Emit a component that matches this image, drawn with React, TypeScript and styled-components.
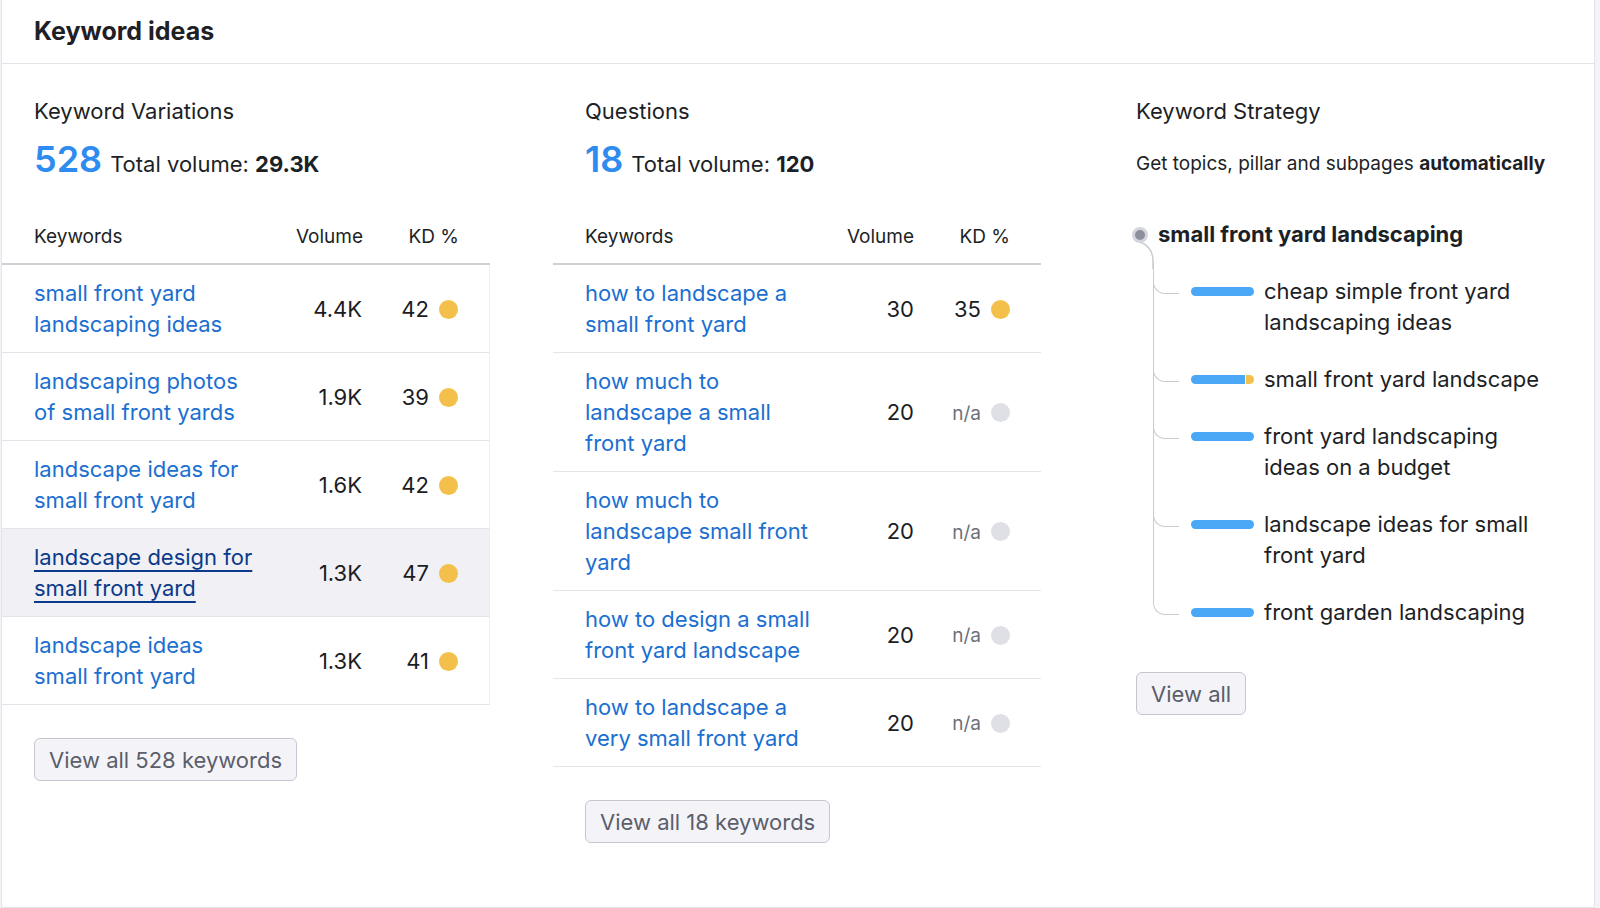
import React from 'react';
import styled, { createGlobalStyle } from 'styled-components';

const GlobalStyle = createGlobalStyle`
  html, body {
    margin: 0;
    padding: 0;
    background: #f4f4f8;
  }
  body {
    font-family: Inter, "Noto Sans", "Liberation Sans", sans-serif;
    color: #1d1f26;
    -webkit-font-smoothing: antialiased;
  }
  * {
    box-sizing: border-box;
  }
`;

const Page = styled.div`
  padding: 0 5px 0 1px;
  min-height: 100vh;
`;

const Card = styled.section`
  background: #fff;
  border: 1px solid #e3e4ea;
  border-top: none;
  min-height: 100vh;
`;

const CardHeader = styled.header`
  height: 64px;
  display: flex;
  align-items: center;
  padding: 0 32px;
  border-bottom: 1px solid #e4e5ea;
`;

const CardTitle = styled.h2`
  margin: 0;
  font-size: 25px;
  line-height: 31px;
  font-weight: 700;
  color: #1f2026;
`;

const Columns = styled.div`
  display: grid;
  grid-template-columns: repeat(3, 488px);
  column-gap: 63px;
  padding-top: 32px;
`;

const Column = styled.div`
  display: flex;
  flex-direction: column;
`;

const ColumnTitle = styled.h3`
  margin: 0;
  padding: 0 32px;
  font-size: 22px;
  line-height: 31px;
  font-weight: 400;
  color: #1d1f26;
`;

const Stats = styled.div`
  display: flex;
  align-items: baseline;
  gap: 8px;
  margin-top: 10px;
  padding: 0 32px;
  line-height: 44px;
`;

const Count = styled.span`
  font-size: 36px;
  font-weight: 600;
  color: #2e8bf0;
`;

const Total = styled.span`
  font-size: 22px;
  color: #1d1f26;

  b {
    font-weight: 700;
  }
`;

const Table = styled.div`
  margin-top: 37px;
`;

const HeadRow = styled.div<{ $kw: number }>`
  display: grid;
  grid-template-columns: ${p => p.$kw}px 1fr 96px;
  padding: 0 31px 13px 32px;
  border-bottom: 2px solid #cfd1d7;
  font-size: 19px;
  line-height: 27px;
  color: #1d1f26;
`;

const HeadCell = styled.div<{ $right?: boolean }>`
  text-align: ${p => (p.$right ? 'right' : 'left')};
`;

const Row = styled.div<{ $kw: number; $hover?: boolean; $edge?: boolean }>`
  display: grid;
  grid-template-columns: ${p => p.$kw}px 1fr 67px 29px;
  align-items: center;
  padding: 13px 31px 12px 32px;
  border-bottom: 1px solid #e4e5ea;
  border-right: ${p => (p.$edge ? '1px solid #eceef2' : 'none')};
  background: ${p => (p.$hover ? '#f0f0f5' : '#fff')};
`;

const KeywordLink = styled.a<{ $hover?: boolean }>`
  font-size: 22px;
  line-height: 31px;
  color: ${p => (p.$hover ? '#0b3a8a' : '#1b6fd1')};
  text-decoration: ${p => (p.$hover ? 'underline' : 'none')};
  text-underline-offset: 5px;
  text-decoration-thickness: 1.5px;
  cursor: pointer;
`;

const Num = styled.div`
  text-align: right;
  font-size: 22px;
  line-height: 31px;
  color: #1b1d24;
`;

const NotAvailable = styled.span`
  font-size: 19px;
  color: #6c6f7a;
`;

const Dot = styled.span<{ $color: string }>`
  justify-self: end;
  width: 19px;
  height: 19px;
  border-radius: 50%;
  background: ${p => p.$color};
`;

const Button = styled.button<{ $gap: number }>`
  align-self: flex-start;
  margin: ${p => p.$gap}px 0 0 32px;
  height: 43px;
  padding: 0 14px;
  font-family: inherit;
  font-size: 22px;
  color: #5b5e6b;
  background: #f4f4f8;
  border: 1px solid #c4c7d0;
  border-radius: 6px;
  cursor: pointer;
`;

const Subtitle = styled.p`
  margin: 23px 0 0;
  padding: 0 32px;
  font-size: 19px;
  line-height: 27px;
  white-space: nowrap;
  color: #1d1f26;

  b {
    font-weight: 700;
  }
`;

const Tree = styled.div`
  margin-top: 42px;
  padding: 0 32px;
`;

const Root = styled.div`
  position: relative;
  display: flex;
  align-items: center;
  gap: 10px;
  margin-left: -4px;
`;

const RootDot = styled.span`
  width: 16px;
  height: 16px;
  border-radius: 50%;
  background: #8d909b;
  border: 3px solid #d4d6dd;
  flex-shrink: 0;
`;

const RootCurve = styled.svg`
  position: absolute;
  left: 7px;
  top: 22px;
`;

const RootText = styled.span`
  font-size: 22px;
  line-height: 31px;
  font-weight: 700;
  color: #1d1f26;
`;

const Children = styled.ul`
  list-style: none;
  margin: 26px 0 0;
  padding: 0;
`;

const Child = styled.li<{ $last?: boolean }>`
  position: relative;
  display: flex;
  align-items: flex-start;
  padding-left: 55px;

  & + & {
    margin-top: 26px;
  }

  &::before {
    content: '';
    position: absolute;
    left: 17px;
    top: -13px;
    width: 25px;
    height: 29.5px;
    border-left: 1.5px solid #c9ccd3;
    border-bottom: 1.5px solid #c9ccd3;
    border-bottom-left-radius: 12px;
  }

  &::after {
    content: '';
    display: ${p => (p.$last ? 'none' : 'block')};
    position: absolute;
    left: 17px;
    top: -13px;
    bottom: -13px;
    border-left: 1.5px solid #c9ccd3;
  }
`;

const Bar = styled.div`
  display: flex;
  gap: 1px;
  width: 63px;
  height: 9px;
  margin-top: 11px;
  border-radius: 5px;
  overflow: hidden;
  flex-shrink: 0;
`;

const BarPart = styled.div<{ $color: string; $width?: number }>`
  background: ${p => p.$color};
  flex: ${p => (p.$width ? `0 0 ${p.$width}px` : '1')};
`;

const ChildText = styled.span`
  margin-left: 10px;
  width: 285px;
  font-size: 22px;
  line-height: 31px;
  color: #1d1f26;
`;

type KeywordRow = { keyword: string; volume: string; kd: number | null; hover?: boolean };

const variations: KeywordRow[] = [
  { keyword: 'small front yard landscaping ideas', volume: '4.4K', kd: 42 },
  { keyword: 'landscaping photos of small front yards', volume: '1.9K', kd: 39 },
  { keyword: 'landscape ideas for small front yard', volume: '1.6K', kd: 42 },
  { keyword: 'landscape design for small front yard', volume: '1.3K', kd: 47, hover: true },
  { keyword: 'landscape ideas small front yard', volume: '1.3K', kd: 41 },
];

const questions: KeywordRow[] = [
  { keyword: 'how to landscape a small front yard', volume: '30', kd: 35 },
  { keyword: 'how much to landscape a small front yard', volume: '20', kd: null },
  { keyword: 'how much to landscape small front yard', volume: '20', kd: null },
  { keyword: 'how to design a small front yard landscape', volume: '20', kd: null },
  { keyword: 'how to landscape a very small front yard', volume: '20', kd: null },
];

const strategy = [
  { text: 'cheap simple front yard landscaping ideas' },
  { text: 'small front yard landscape', accent: true },
  { text: 'front yard landscaping ideas on a budget' },
  { text: 'landscape ideas for small front yard' },
  { text: 'front garden landscaping' },
];

const KeywordTable = ({ rows, kw, edge }: { rows: KeywordRow[]; kw: number; edge?: boolean }) => (
  <Table>
    <HeadRow $kw={kw}>
      <HeadCell>Keywords</HeadCell>
      <HeadCell $right>Volume</HeadCell>
      <HeadCell $right>KD %</HeadCell>
    </HeadRow>
    {rows.map(r => (
      <Row key={r.keyword} $kw={kw} $hover={r.hover} $edge={edge}>
        <div>
          <KeywordLink $hover={r.hover}>{r.keyword}</KeywordLink>
        </div>
        <Num>{r.volume}</Num>
        <Num>{r.kd === null ? <NotAvailable>n/a</NotAvailable> : r.kd}</Num>
        <Dot $color={r.kd === null ? '#dfe0e6' : '#f4c04c'} />
      </Row>
    ))}
  </Table>
);

export default function App() {
  return (
    <Page>
      <GlobalStyle />
      <Card>
        <CardHeader>
          <CardTitle>Keyword ideas</CardTitle>
        </CardHeader>
        <Columns>
          <Column>
            <ColumnTitle>Keyword Variations</ColumnTitle>
            <Stats>
              <Count>528</Count>
              <Total>
                Total volume: <b>29.3K</b>
              </Total>
            </Stats>
            <KeywordTable rows={variations} kw={222} edge />
            <Button $gap={33}>View all 528 keywords</Button>
          </Column>

          <Column>
            <ColumnTitle>Questions</ColumnTitle>
            <Stats>
              <Count>18</Count>
              <Total>
                Total volume: <b>120</b>
              </Total>
            </Stats>
            <KeywordTable rows={questions} kw={234} />
            <Button $gap={33}>View all 18 keywords</Button>
          </Column>

          <Column>
            <ColumnTitle>Keyword Strategy</ColumnTitle>
            <Subtitle>
              Get topics, pillar and subpages <b>automatically</b>
            </Subtitle>
            <Tree>
              <Root>
                <RootDot />
                <RootText>small front yard landscaping</RootText>
                <RootCurve width="16" height="28" viewBox="0 0 16 28" fill="none">
                  <path d="M1 1 C 9 4, 14 10, 14 20 V 28" stroke="#c9ccd3" strokeWidth="1.5" />
                </RootCurve>
              </Root>
              <Children>
                {strategy.map((s, i) => (
                  <Child key={s.text} $last={i === strategy.length - 1}>
                    <Bar>
                      <BarPart $color="#4aa8f6" />
                      {s.accent && <BarPart $color="#f4c04c" $width={8} />}
                    </Bar>
                    <ChildText>{s.text}</ChildText>
                  </Child>
                ))}
              </Children>
            </Tree>
            <Button $gap={44}>View all</Button>
          </Column>
        </Columns>
      </Card>
    </Page>
  );
}
